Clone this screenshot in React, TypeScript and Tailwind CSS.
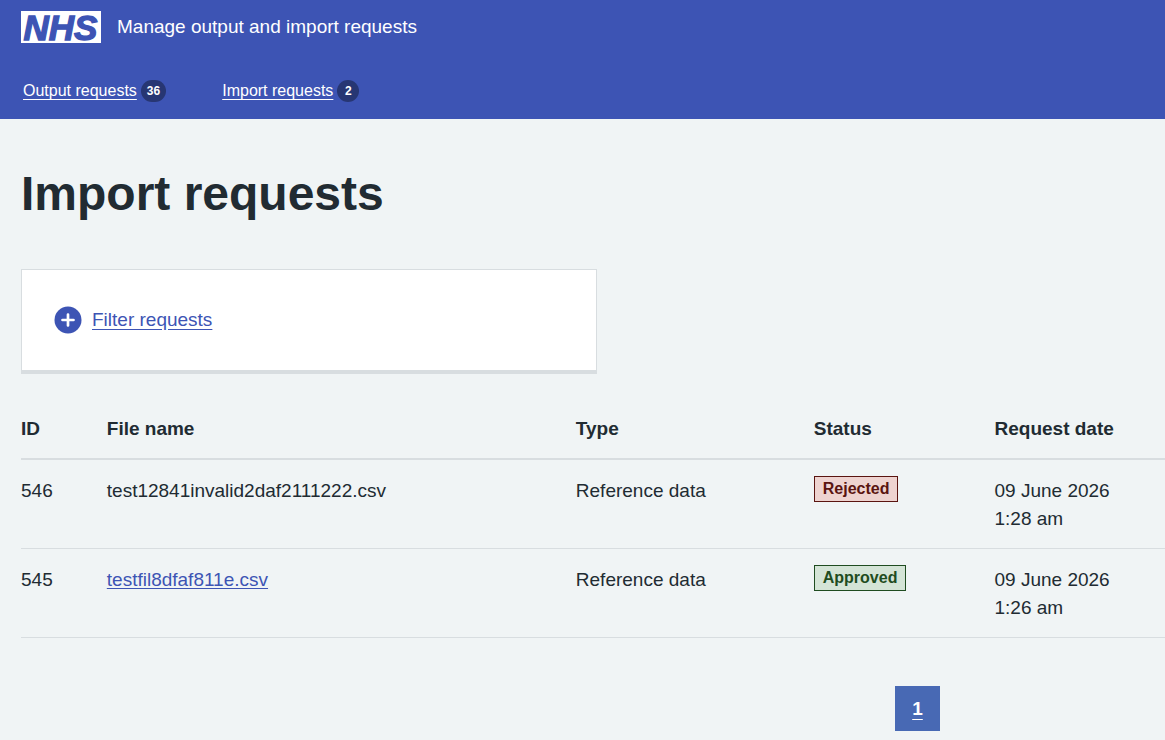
const navItems = [
  { label: 'Output requests', count: 36 },
  { label: 'Import requests', count: 2 },
];

const columns = ['ID', 'File name', 'Type', 'Status', 'Request date'];

type ImportRequest = {
  id: number;
  fileName: string;
  type: string;
  status: 'Rejected' | 'Approved';
  date: string;
  time: string;
};

const requests: ImportRequest[] = [
  { id: 546, fileName: 'test12841invalid2daf2111222.csv', type: 'Reference data', status: 'Rejected', date: '09 June 2026', time: '1:28 am' },
  { id: 545, fileName: 'testfil8dfaf811e.csv', type: 'Reference data', status: 'Approved', date: '09 June 2026', time: '1:26 am' },
];

const tagStyles = {
  Rejected: 'border-[#5a1410] bg-[#eed3d0] text-[#5a1410]',
  Approved: 'border-[#1f4c20] bg-[#d4e4d6] text-[#1f4c20]',
};

function Logo() {
  return (
    <svg viewBox="0 0 80 32" className="h-8 w-20 overflow-visible" aria-hidden="true">
      <rect width="80" height="32" fill="#fff" />
      <text
        x="39.5"
        y="29"
        textAnchor="middle"
        fontSize="35"
        fill="#3d54b4"
        stroke="#3d54b4"
        strokeWidth="1.3"
        className="font-bold italic"
      >
        NHS
      </text>
    </svg>
  );
}

function Header() {
  return (
    <header className="bg-[#3d54b4] px-[21px] pt-[11px] pb-[15px] text-white">
      <div className="flex items-center gap-4">
        <a href="#home" aria-label="NHS home">
          <Logo />
        </a>
        <span className="text-[19px] leading-7">Manage output and import requests</span>
      </div>
      <nav aria-label="Primary" className="mt-[35px] flex gap-14 pl-[2px]">
        {navItems.map((item) => (
          <a key={item.label} href="#requests" className="flex items-center gap-1 py-[2px] text-base leading-[22px]">
            <span className="underline underline-offset-[3px]">{item.label}</span>
            <span className="flex h-[22px] min-w-[22px] items-center justify-center rounded-full bg-[#273673] px-[6px] text-xs font-bold">
              {item.count}
            </span>
          </a>
        ))}
      </nav>
    </header>
  );
}

function FilterCard() {
  return (
    <section className="max-w-[576px] border border-b-4 border-[#d8dde0] bg-white p-8">
      <button type="button" aria-expanded={false} className="flex h-9 items-center gap-[10px] text-[#3d54b4]">
        <svg viewBox="0 0 28 28" className="size-7" aria-hidden="true">
          <circle cx="14" cy="14" r="13.5" fill="currentColor" />
          <path d="M14 8.5v11M8.5 14h11" stroke="#fff" strokeWidth="2.7" strokeLinecap="round" />
        </svg>
        <span className="leading-7 underline underline-offset-[3px]">Filter requests</span>
      </button>
    </section>
  );
}

function RequestsTable() {
  return (
    <table className="mt-6 w-full table-fixed text-left">
      <colgroup>
        <col className="w-[7.5%]" />
        <col className="w-[41%]" />
        <col className="w-[20.8%]" />
        <col className="w-[15.8%]" />
        <col />
      </colgroup>
      <thead>
        <tr className="border-b-2 border-[#d8dde0]">
          {columns.map((name) => (
            <th key={name} scope="col" className="pt-[17px] pb-[15px] font-bold">
              {name}
            </th>
          ))}
        </tr>
      </thead>
      <tbody>
        {requests.map((request) => (
          <tr key={request.id} className="border-b border-[#d8dde0] align-top">
            <td className="pt-[17px] pb-[15px]">{request.id}</td>
            <td className="pt-[17px] pb-[15px]">
              {request.status === 'Approved' ? (
                <a href="#file" className="text-[#3d54b4] underline underline-offset-2">
                  {request.fileName}
                </a>
              ) : (
                request.fileName
              )}
            </td>
            <td className="pt-[17px] pb-[15px]">{request.type}</td>
            <td className="py-4">
              <strong className={`block w-fit border px-2 text-base leading-6 ${tagStyles[request.status]}`}>
                {request.status}
              </strong>
            </td>
            <td className="pt-[17px] pb-[15px]">
              {request.date}
              <br />
              {request.time}
            </td>
          </tr>
        ))}
      </tbody>
    </table>
  );
}

export default function App() {
  return (
    <div className="min-h-screen bg-[#f0f4f5] font-['Liberation_Sans',Arial,sans-serif] text-[#212b32]">
      <Header />
      <main className="pl-[21px] text-[19px] leading-7">
        <h1 className="pt-[43px] pb-[43px] text-5xl leading-[64px] font-bold">Import requests</h1>
        <FilterCard />
        <RequestsTable />
        <nav aria-label="Pagination" className="mt-12 flex justify-end pr-[225px] pb-2">
          <a
            href="#page-1"
            aria-current="page"
            className="flex size-[45px] items-center justify-center bg-[#4869b4] font-bold text-white underline underline-offset-4"
          >
            1
          </a>
        </nav>
      </main>
    </div>
  );
}
